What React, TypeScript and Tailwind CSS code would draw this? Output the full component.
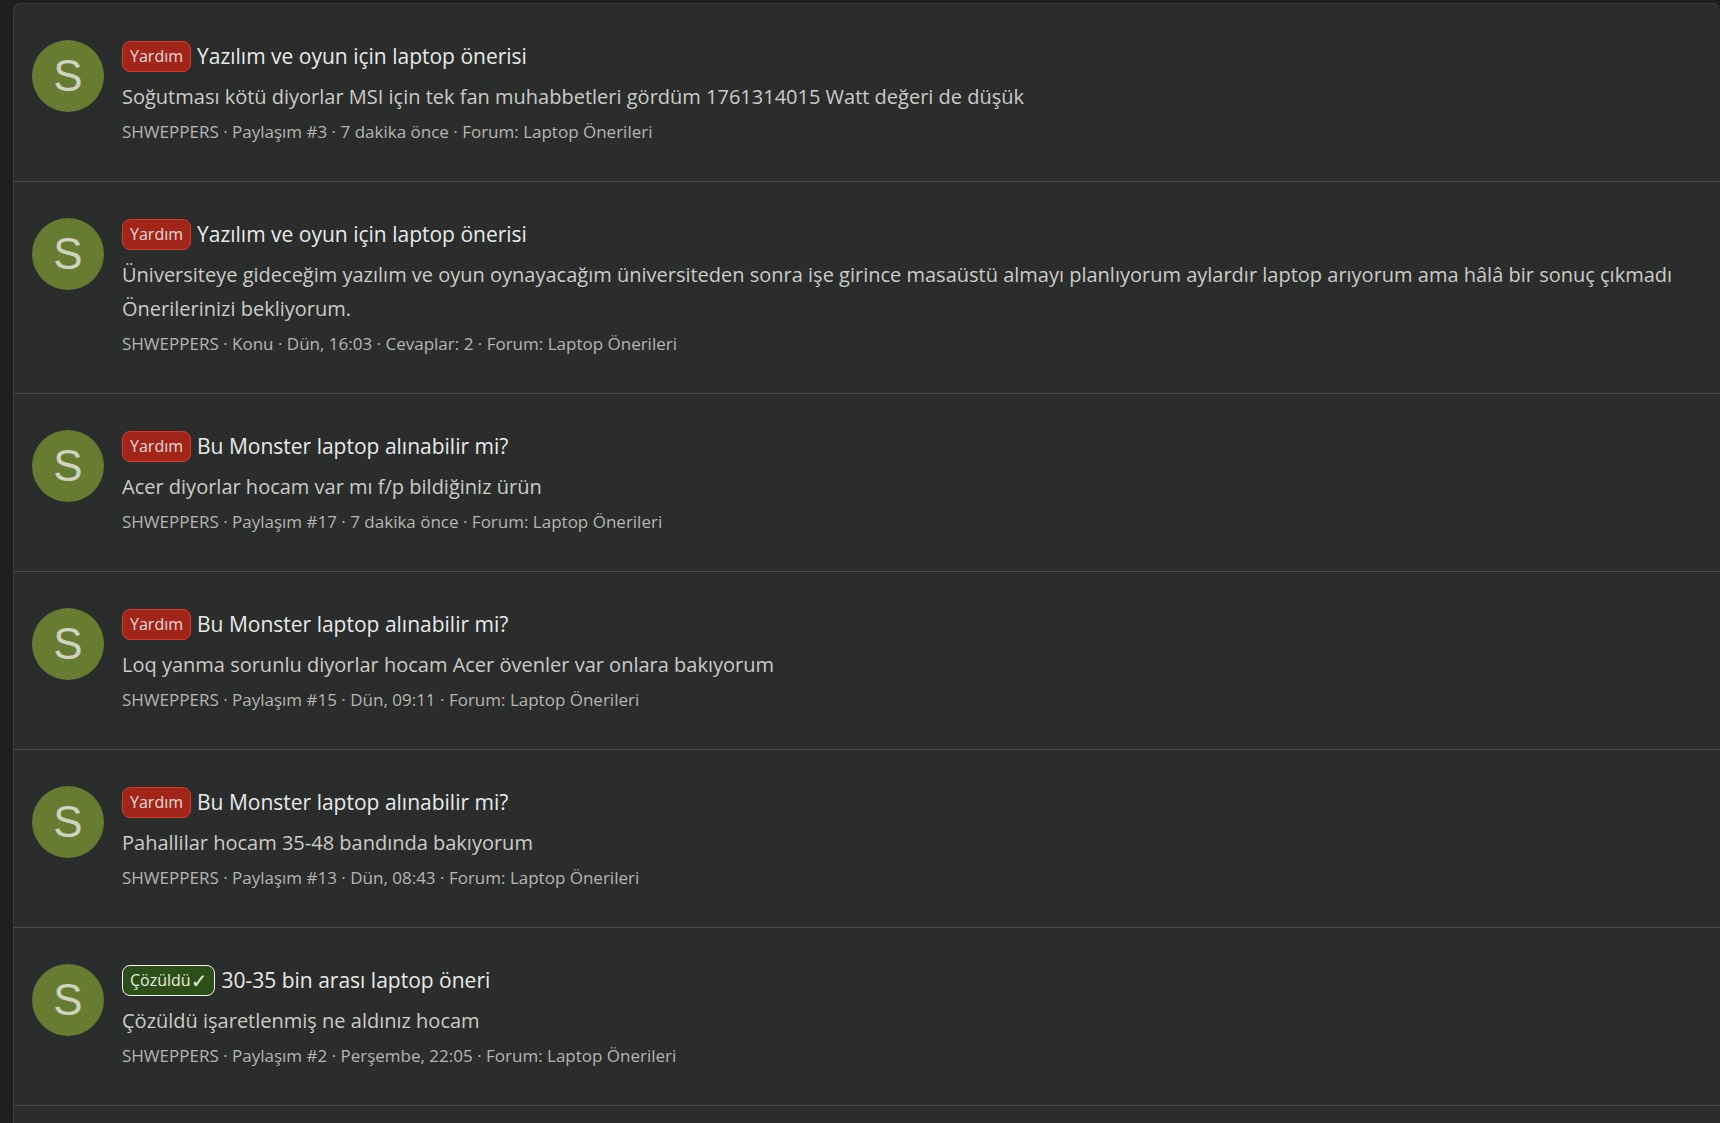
type Label = 'help' | 'solved'

interface Result {
  id: number
  label: Label
  title: string
  snippet: string
  meta: string[]
}

const results: Result[] = [
  {
    id: 1,
    label: 'help',
    title: 'Yazılım ve oyun için laptop önerisi',
    snippet: 'Soğutması kötü diyorlar MSI için tek fan muhabbetleri gördüm 1761314015 Watt değeri de düşük',
    meta: ['Paylaşım #3', '7 dakika önce'],
  },
  {
    id: 2,
    label: 'help',
    title: 'Yazılım ve oyun için laptop önerisi',
    snippet:
      'Üniversiteye gideceğim yazılım ve oyun oynayacağım üniversiteden sonra işe girince masaüstü almayı planlıyorum aylardır laptop arıyorum ama hâlâ bir sonuç çıkmadı\nÖnerilerinizi bekliyorum.',
    meta: ['Konu', 'Dün, 16:03', 'Cevaplar: 2'],
  },
  {
    id: 3,
    label: 'help',
    title: 'Bu Monster laptop alınabilir mi?',
    snippet: 'Acer diyorlar hocam var mı f/p bildiğiniz ürün',
    meta: ['Paylaşım #17', '7 dakika önce'],
  },
  {
    id: 4,
    label: 'help',
    title: 'Bu Monster laptop alınabilir mi?',
    snippet: 'Loq yanma sorunlu diyorlar hocam Acer övenler var onlara bakıyorum',
    meta: ['Paylaşım #15', 'Dün, 09:11'],
  },
  {
    id: 5,
    label: 'help',
    title: 'Bu Monster laptop alınabilir mi?',
    snippet: 'Pahallilar hocam 35-48 bandında bakıyorum',
    meta: ['Paylaşım #13', 'Dün, 08:43'],
  },
  {
    id: 6,
    label: 'solved',
    title: '30-35 bin arası laptop öneri',
    snippet: 'Çözüldü işaretlenmiş ne aldınız hocam',
    meta: ['Paylaşım #2', 'Perşembe, 22:05'],
  },
]

const labels: Record<Label, { text: string; mark?: string; className: string }> = {
  help: { text: 'Yardım', className: 'border-[#d63a2c] bg-[#a12619] text-[#f3dcd9]' },
  solved: { text: 'Çözüldü', mark: '✓', className: 'border-[#f0f5ec] bg-[#2c4f1a] text-[#e6eedf]' },
}

function LabelBadge({ label }: { label: Label }) {
  const { text, mark, className } = labels[label]
  return (
    <span className={`flex h-[31px] shrink-0 items-center rounded-lg border px-[7px] text-[16px] ${className}`}>
      {text}
      {mark && <span className="text-[20px]">{mark}</span>}
    </span>
  )
}

function ResultRow({ result }: { result: Result }) {
  return (
    <li className="flex gap-[18px] border-b border-[#4a4c4b] px-[18px] py-9">
      {/* Avatar */}
      <a
        href="#"
        className="flex size-[72px] shrink-0 items-center justify-center rounded-full bg-[#687c31] pb-px font-['Liberation_Sans',sans-serif] text-[44px] leading-none text-[#cfd2c2]"
      >
        S
      </a>

      {/* Content */}
      <div className="min-w-0 flex-1">
        <h3 className="flex h-[33px] items-center gap-1.5 text-[21px] leading-[33px] text-[#e9e9e9]">
          <LabelBadge label={result.label} />
          <a href="#">{result.title}</a>
        </h3>
        <p className="mt-[7px] text-[20px] leading-[34px] whitespace-pre-line text-[#cbcbc8]">{result.snippet}</p>
        <p className="mt-1 text-[17px] leading-[27px] text-[#b5b5b1]">
          <a href="#">SHWEPPERS</a>
          {result.meta.map((part) => ` · ${part}`)}
          {' · Forum: '}
          <a href="#">Laptop Önerileri</a>
        </p>
      </div>
    </li>
  )
}

export default function App() {
  return (
    <div className="h-screen overflow-hidden bg-[#1e1e1e] pt-[3px] pl-[13px] font-['Open_Sans','DejaVu_Sans',sans-serif]">
      <ol className="min-h-full rounded-t-lg border-t border-l border-[#3d3f3e] bg-[#2b2d2c]">
        {results.map((result) => (
          <ResultRow key={result.id} result={result} />
        ))}
      </ol>
    </div>
  )
}
